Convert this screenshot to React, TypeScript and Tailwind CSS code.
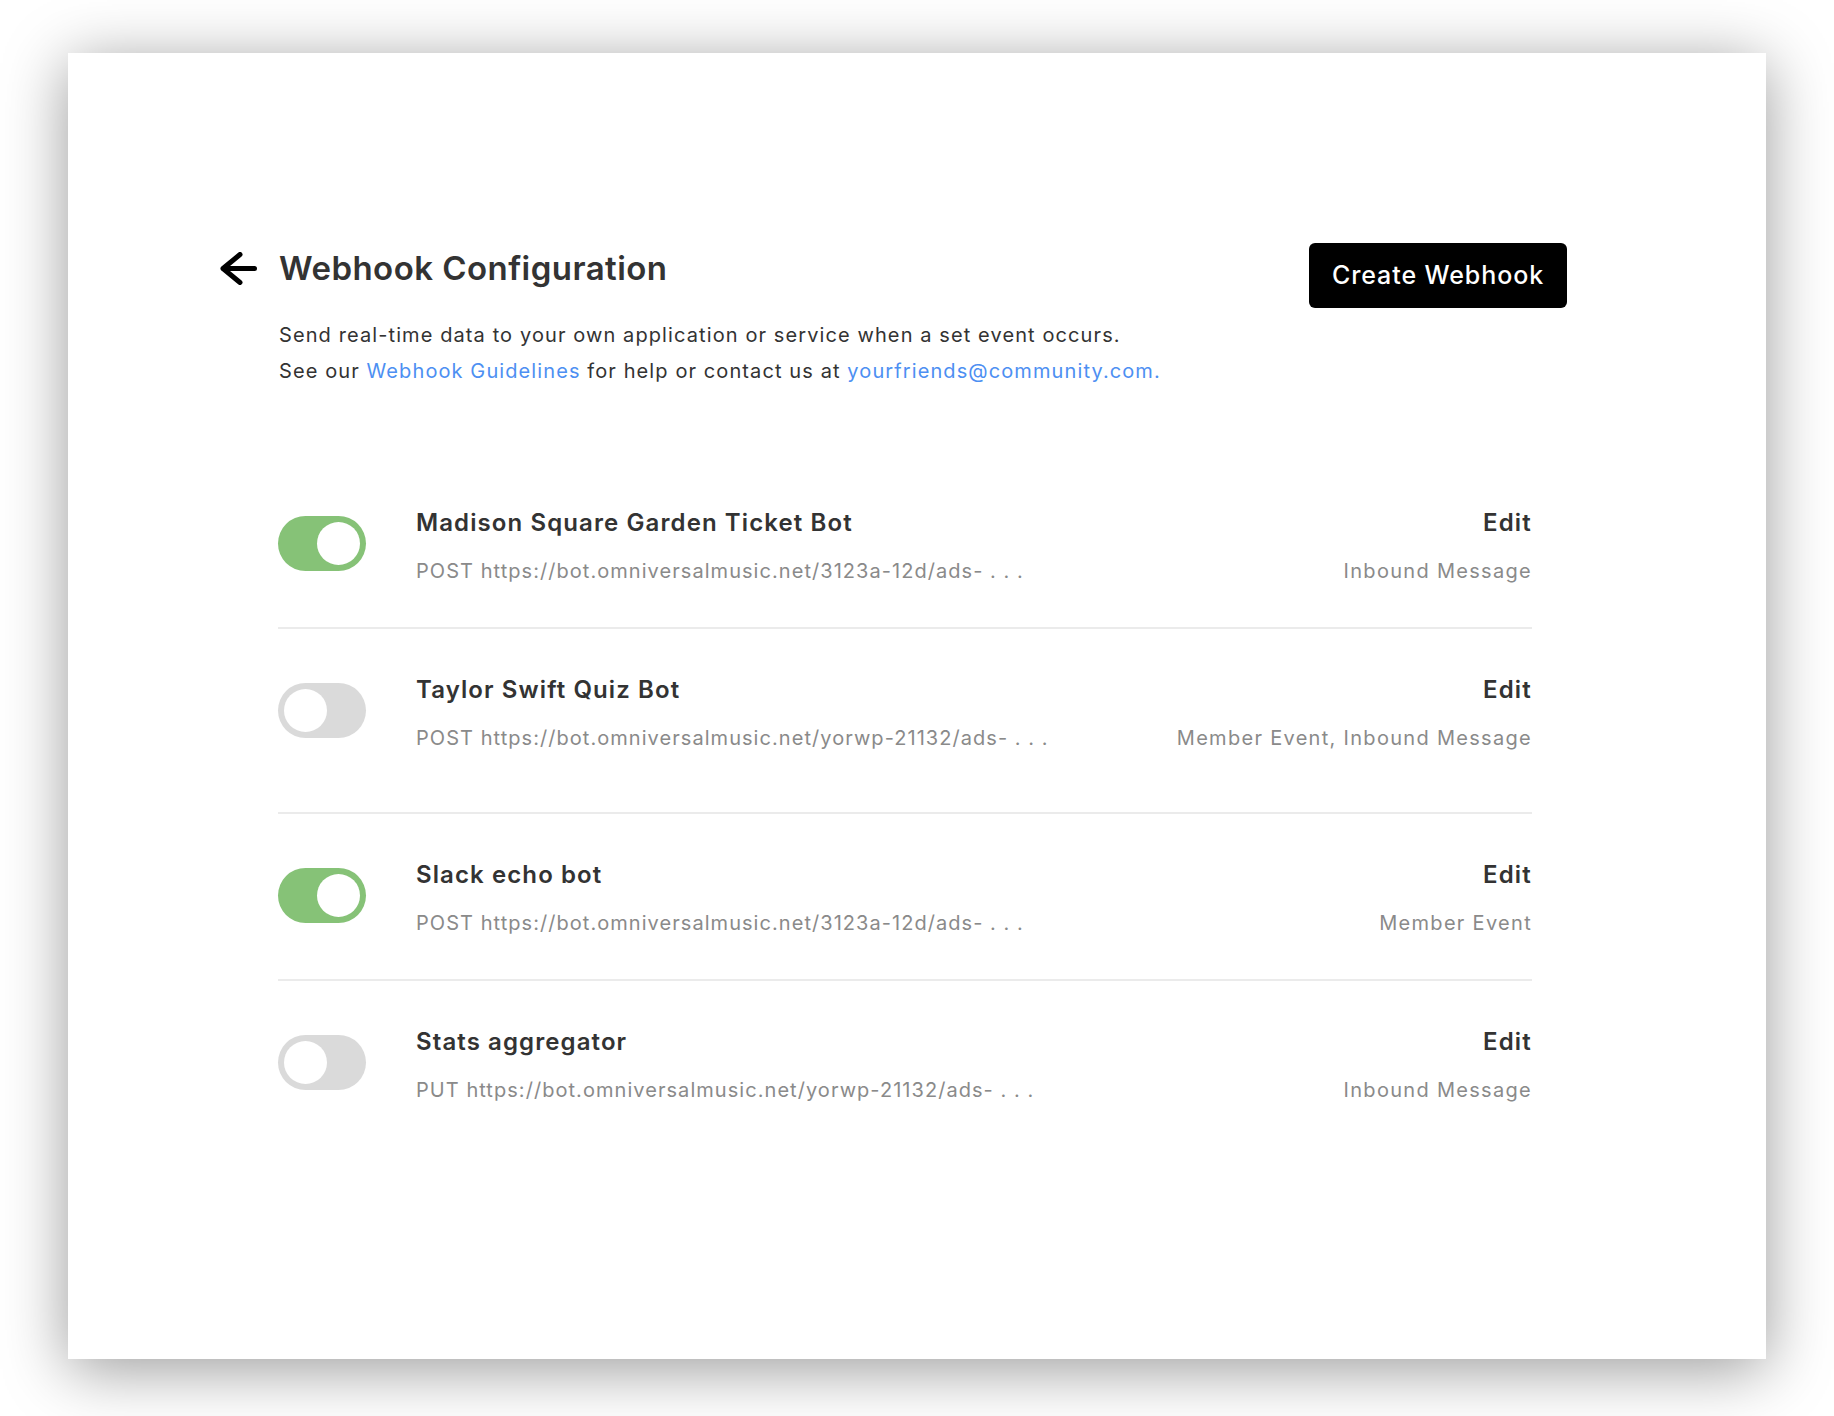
import React from 'react';

type Hook = {
  name: string;
  url: string;
  events: string;
  enabled: boolean;
  tall?: boolean;
};

const HOOKS: Hook[] = [
  {
    name: 'Madison Square Garden Ticket Bot',
    url: 'POST https://bot.omniversalmusic.net/3123a-12d/ads- . . .',
    events: 'Inbound Message',
    enabled: true,
  },
  {
    name: 'Taylor Swift Quiz Bot',
    url: 'POST https://bot.omniversalmusic.net/yorwp-21132/ads- . . .',
    events: 'Member Event, Inbound Message',
    enabled: false,
    tall: true,
  },
  {
    name: 'Slack echo bot',
    url: 'POST https://bot.omniversalmusic.net/3123a-12d/ads- . . .',
    events: 'Member Event',
    enabled: true,
  },
  {
    name: 'Stats aggregator',
    url: 'PUT https://bot.omniversalmusic.net/yorwp-21132/ads- . . .',
    events: 'Inbound Message',
    enabled: false,
  },
];

function Toggle({ on }: { on: boolean }) {
  return (
    <span
      className={`relative mt-[9px] inline-flex h-[55px] w-[88px] shrink-0 items-center rounded-full ${
        on ? 'bg-[#86c277] justify-end' : 'bg-[#dadada] justify-start'
      }`}
    >
      <span className="mx-[6px] h-[43px] w-[43px] rounded-full bg-white" />
    </span>
  );
}

function BackArrow() {
  return (
    <svg width="37" height="33" viewBox="0 0 37 33" fill="none" className="mt-[4px] shrink-0">
      <path
        d="M34.5 16.5H3M20 2.5L3 16.5L20 30.5"
        stroke="#000"
        strokeWidth="5"
        strokeLinecap="round"
        strokeLinejoin="round"
      />
    </svg>
  );
}

function HookRow({ hook, last }: { hook: Hook; last: boolean }) {
  return (
    <div
      className={`flex items-start pt-[45px] ${hook.tall ? 'pb-[60px]' : 'pb-[42px]'} ${
        last ? '' : 'border-b-2 border-[#ebebeb]'
      }`}
    >
      <Toggle on={hook.enabled} />
      <div className="ml-[50px] flex-1 min-w-0">
        <div className="text-[24px] leading-[32px] font-semibold tracking-[1.1px] text-[#333]">{hook.name}</div>
        <div className="mt-[18px] text-[20px] leading-[28px] tracking-[1.05px] text-[#8a8a8a]">{hook.url}</div>
      </div>
      <div className="flex flex-col items-end">
        <button className="text-[24px] leading-[32px] font-semibold tracking-[1.2px] text-[#333]">Edit</button>
        <div className="mt-[18px] text-[20px] leading-[28px] tracking-[1.3px] text-[#8a8a8a]">{hook.events}</div>
      </div>
    </div>
  );
}

export default function App() {
  return (
    <div
      className="min-h-[1416px] bg-white px-[68px] pt-[53px] pb-[57px]"
      style={{ fontFamily: 'Inter, "Noto Sans", sans-serif' }}
    >
      <div className="h-[1306px] bg-white pt-[190px] pl-[152px] pr-[199px] shadow-[0_10px_60px_rgba(0,0,0,0.4)]">
        {/* Header */}
        <div className="flex items-start justify-between">
          <div className="flex items-start gap-[22px] pt-[5px]">
            <BackArrow />
            <div>
              <h1 className="text-[33px] leading-[40px] font-semibold tracking-[0.45px] text-[#333]">
                Webhook Configuration
              </h1>
              <p className="mt-[29px] text-[20px] leading-[36px] tracking-[1.1px] text-[#333]">
                Send real-time data to your own application or service when a set event occurs.
                <br />
                See our <a className="text-[#4d8ff2]">Webhook Guidelines</a> for help or contact us at{' '}
                <a className="text-[#4d8ff2]">yourfriends@community.com.</a>
              </p>
            </div>
          </div>
          <button className="h-[65px] w-[258px] rounded-[6px] bg-black text-[25px] font-medium tracking-[0.9px] text-white">
            Create Webhook
          </button>
        </div>

        {/* Webhook list */}
        <div className="ml-[58px] mr-[35px] mt-[73px]">
          {HOOKS.map((h, i) => (
            <HookRow key={h.name} hook={h} last={i === HOOKS.length - 1} />
          ))}
        </div>
      </div>
    </div>
  );
}
